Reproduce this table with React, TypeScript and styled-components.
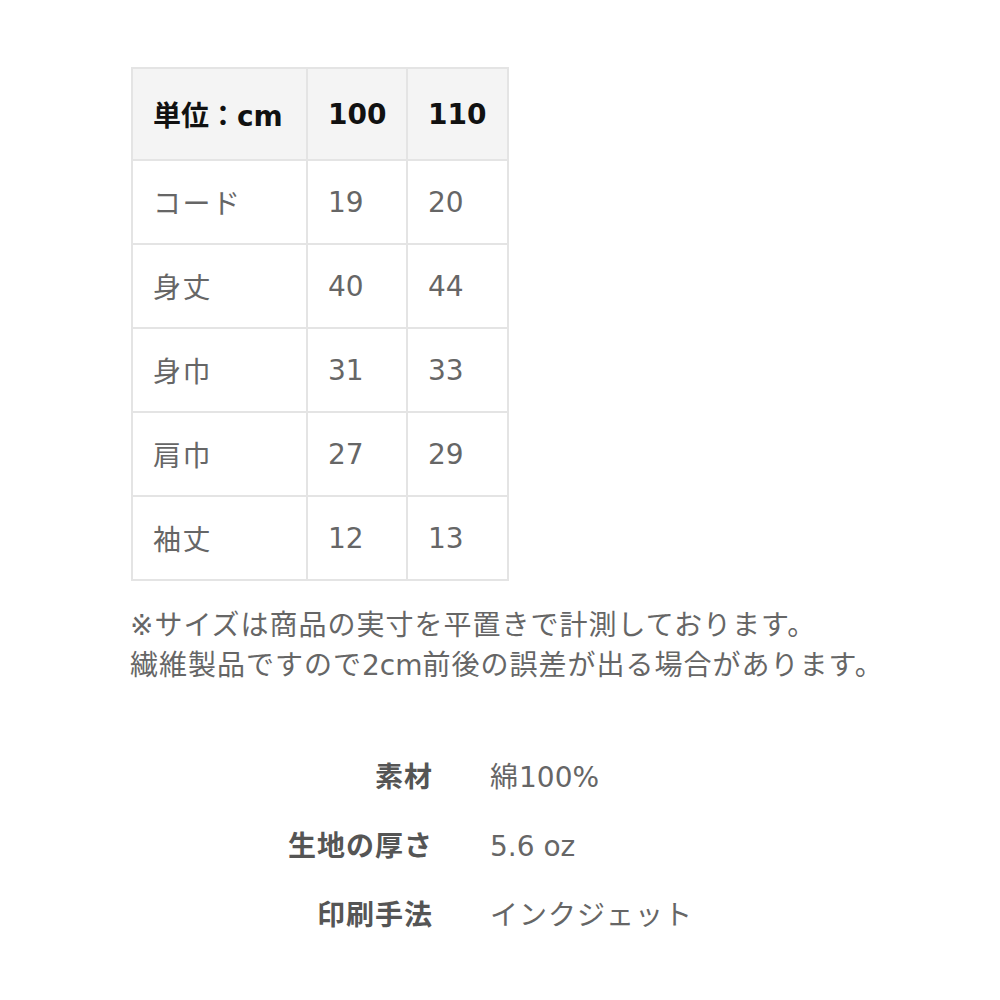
import React from "react";
import styled, { createGlobalStyle } from "styled-components";

const Global = createGlobalStyle`
  html, body { margin: 0; padding: 0; background: #fff; }
  body { font-family: "DejaVu Sans", "Noto Sans CJK JP", sans-serif; }
`;

const Page = styled.div`
  width: 1000px;
  height: 1000px;
  padding: 67px 0 0 131px;
  box-sizing: border-box;
`;

const Table = styled.table`
  border-collapse: collapse;
  font-size: 28px;
  color: #666;
`;

const HeadCell = styled.th<{ $w: number }>`
  width: ${(p) => p.$w}px;
  height: 92px;
  box-sizing: border-box;
  padding: 0 0 0 20px;
  text-align: left;
  background: #f4f4f4;
  color: #111;
  font-weight: bold;
  border: 2px solid #e4e4e4;
`;

const Cell = styled.td<{ $jp?: boolean }>`
  height: 82px;
  padding: 0 0 0 20px;
  text-align: left;
  letter-spacing: ${(p) => (p.$jp ? "1.5px" : "0")};
  border: 2px solid #e4e4e4;
`;

const Lat = styled.span`
  letter-spacing: 0;
`;

const Notes = styled.p`
  margin: 25px 0 0 -1px;
  font-size: 28px;
  line-height: 40px;
  letter-spacing: 1px;
  color: #666;
  white-space: nowrap;
`;

const Specs = styled.dl`
  margin: 72px 0 0 0;
  display: grid;
  grid-template-columns: 301px auto;
  column-gap: 58px;
  row-gap: 29px;
  font-size: 28px;
  line-height: 40px;
  letter-spacing: 1px;
`;

const Label = styled.dt`
  text-align: right;
  font-weight: bold;
  color: #555;
  margin-right: -1px;
`;

const Value = styled.dd`
  margin: 0;
  color: #666;
`;

const rows: [string, string, string][] = [
  ["コード", "19", "20"],
  ["身丈", "40", "44"],
  ["身巾", "31", "33"],
  ["肩巾", "27", "29"],
  ["袖丈", "12", "13"],
];

const specs: [string, React.ReactNode][] = [
  ["素材", <>綿<Lat>100%</Lat></>],
  ["生地の厚さ", <Lat>5.6 oz</Lat>],
  ["印刷手法", "インクジェット"],
];

export default function App() {
  return (
    <Page>
      <Global />
      <Table>
        <thead>
          <tr>
            <HeadCell $w={175}>単位：cm</HeadCell>
            <HeadCell $w={100}>100</HeadCell>
            <HeadCell $w={101}>110</HeadCell>
          </tr>
        </thead>
        <tbody>
          {rows.map((r) => (
            <tr key={r[0]}>
              {r.map((c, i) => (
                <Cell key={i} $jp={i === 0}>{c}</Cell>
              ))}
            </tr>
          ))}
        </tbody>
      </Table>
      <Notes>
        ※サイズは商品の実寸を平置きで計測しております。
        <br />
        繊維製品ですので<Lat>2cm</Lat>前後の誤差が出る場合があります。
      </Notes>
      <Specs>
        {specs.map(([l, v]) => (
          <React.Fragment key={l}>
            <Label>{l}</Label>
            <Value>{v}</Value>
          </React.Fragment>
        ))}
      </Specs>
    </Page>
  );
}
